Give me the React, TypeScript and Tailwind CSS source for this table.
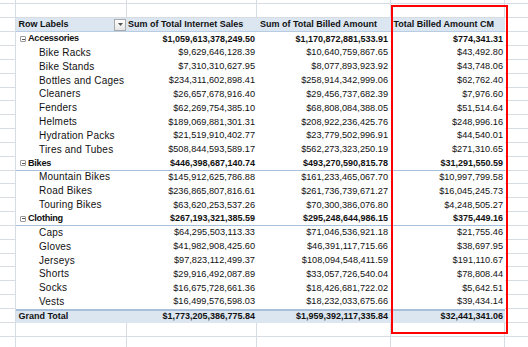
import React from 'react';

type Row = { kind: 'head' | 'cat' | 'item' | 'total'; label: string; v: string[] };

const GRID = 'border-[#d7dbe2]';

const ROWS: Row[] = [
  { kind: 'cat', label: 'Accessories', v: ['$1,059,613,378,249.50', '$1,170,872,881,533.91', '$774,341.31'] },
  { kind: 'item', label: 'Bike Racks', v: ['$9,629,646,128.39', '$10,640,759,867.65', '$43,492.80'] },
  { kind: 'item', label: 'Bike Stands', v: ['$7,310,310,627.95', '$8,077,893,923.92', '$43,748.06'] },
  { kind: 'item', label: 'Bottles and Cages', v: ['$234,311,602,898.41', '$258,914,342,999.06', '$62,762.40'] },
  { kind: 'item', label: 'Cleaners', v: ['$26,657,678,916.40', '$29,456,737,682.39', '$7,976.60'] },
  { kind: 'item', label: 'Fenders', v: ['$62,269,754,385.10', '$68,808,084,388.05', '$51,514.64'] },
  { kind: 'item', label: 'Helmets', v: ['$189,069,881,301.31', '$208,922,236,425.76', '$248,996.16'] },
  { kind: 'item', label: 'Hydration Packs', v: ['$21,519,910,402.77', '$23,779,502,996.91', '$44,540.01'] },
  { kind: 'item', label: 'Tires and Tubes', v: ['$508,844,593,589.17', '$562,273,323,250.19', '$271,310.65'] },
  { kind: 'cat', label: 'Bikes', v: ['$446,398,687,140.74', '$493,270,590,815.78', '$31,291,550.59'] },
  { kind: 'item', label: 'Mountain Bikes', v: ['$145,912,625,786.88', '$161,233,465,067.70', '$10,997,799.58'] },
  { kind: 'item', label: 'Road Bikes', v: ['$236,865,807,816.61', '$261,736,739,671.27', '$16,045,245.73'] },
  { kind: 'item', label: 'Touring Bikes', v: ['$63,620,253,537.26', '$70,300,386,076.80', '$4,248,505.27'] },
  { kind: 'cat', label: 'Clothing', v: ['$267,193,321,385.59', '$295,248,644,986.15', '$375,449.16'] },
  { kind: 'item', label: 'Caps', v: ['$64,295,503,113.33', '$71,046,536,921.18', '$21,755.46'] },
  { kind: 'item', label: 'Gloves', v: ['$41,982,908,425.60', '$46,391,117,715.66', '$38,697.95'] },
  { kind: 'item', label: 'Jerseys', v: ['$97,823,112,499.37', '$108,094,548,411.59', '$191,110.67'] },
  { kind: 'item', label: 'Shorts', v: ['$29,916,492,087.89', '$33,057,726,540.04', '$78,808.44'] },
  { kind: 'item', label: 'Socks', v: ['$16,675,728,661.36', '$18,426,681,722.02', '$5,642.51'] },
  { kind: 'item', label: 'Vests', v: ['$16,499,576,598.03', '$18,232,033,675.66', '$39,434.14'] },
  { kind: 'total', label: 'Grand Total', v: ['$1,773,205,386,775.84', '$1,959,392,117,335.84', '$32,441,341.06'] },
];

function EmptyRow({ h = 'h-[13.85px]' }: { h?: string }) {
  return (
    <div className={`flex ${h}`}>
      <div className={`w-[16px] border-r border-b ${GRID}`} />
      <div className={`w-[111px] border-r border-b ${GRID}`} />
      <div className={`w-[130px] border-r border-b ${GRID}`} />
      <div className={`w-[134px] border-r border-b ${GRID}`} />
      <div className={`w-[114px] border-r border-b ${GRID}`} />
      <div className={`flex-1 border-b ${GRID}`} />
    </div>
  );
}

function Collapse() {
  return (
    <span className="w-[6px] h-[6px] border border-[#9a9a9a] rounded-[1px] bg-white flex items-center justify-center mr-[2px] shrink-0">
      <span className="w-[3px] h-px bg-[#555]" />
    </span>
  );
}

function PivotRow({ row }: { row: Row }) {
  const bold = row.kind !== 'item';
  const band =
    row.kind === 'total'
      ? 'bg-[#dce6f1] border-t-2 border-[#a9c0dc]'
      : row.kind === 'cat' && row.label !== 'Accessories'
      ? 'bg-white border-b border-[#a9c0dc]'
      : 'bg-white';
  const num = bold ? 'font-bold text-[9px]' : 'text-[9.2px]';
  return (
    <div className="flex h-[13.85px]">
      <div className={`w-[16px] border-r border-b ${GRID}`} />
      <div className={`flex ${band}`}>
        <div className="w-[111px] flex items-center">
          {row.kind === 'cat' && (
            <span className="flex items-center pl-[4px]">
              <Collapse />
              <span className="font-bold text-[9.2px] tracking-[-0.3px]">{row.label}</span>
            </span>
          )}
          {row.kind === 'item' && <span className="pl-[23px] text-[10px] tracking-[0.2px]">{row.label}</span>}
          {row.kind === 'total' && <span className="pl-[2.5px] font-bold text-[9px]">{row.label}</span>}
        </div>
        <div className={`w-[130px] flex items-center justify-end pr-[2px] ${num}`}>{row.v[0]}</div>
        <div className={`w-[134px] flex items-center justify-end pr-[3px] ${num}`}>{row.v[1]}</div>
        <div className={`w-[114px] flex items-center justify-end pr-[2px] ${num}`}>{row.v[2]}</div>
      </div>
      <div className={`flex-1 border-b ${GRID}`} />
    </div>
  );
}

function HeaderRow() {
  return (
    <div className="flex h-[13.85px]">
      <div className={`w-[16px] border-r border-b ${GRID}`} />
      <div className="flex bg-[#dce6f1] border-b border-[#b8cce4] font-bold text-[9px]">
        <div className="w-[111px] flex items-center justify-between pl-[2.5px] pr-[1px]">
          <span>Row Labels</span>
          <span className="w-[12px] h-[12px] border border-[#a9a9a9] bg-gradient-to-b from-white to-[#e6e6e6] flex items-center justify-center">
            <svg width="5" height="3" viewBox="0 0 5 3">
              <path d="M0 0h5L2.5 3z" fill="#555" />
            </svg>
          </span>
        </div>
        <div className="w-[130px] flex items-center pl-[1px]">Sum of Total Internet Sales</div>
        <div className="w-[134px] flex items-center pl-[3px]">Sum of Total Billed Amount</div>
        <div className="w-[114px] flex items-center pl-[2.5px]">Total Billed Amount CM</div>
      </div>
      <div className={`flex-1 border-b ${GRID}`} />
    </div>
  );
}

export default function App() {
  return (
    <div className="relative w-[528px] h-[347px] overflow-hidden bg-white text-[#111] font-['Liberation_Sans',Arial,sans-serif] leading-none">
      <EmptyRow h="h-[4.45px]" />
      <EmptyRow />
      <HeaderRow />
      {ROWS.map((r) => (
        <PivotRow key={r.label} row={r} />
      ))}
      <EmptyRow />
      <EmptyRow />

      {/* red highlight around the CM column */}
      <div className="absolute left-[390.5px] top-[5px] w-[117px] h-[329px] border-2 border-[#ff0000] pointer-events-none" />
    </div>
  );
}
